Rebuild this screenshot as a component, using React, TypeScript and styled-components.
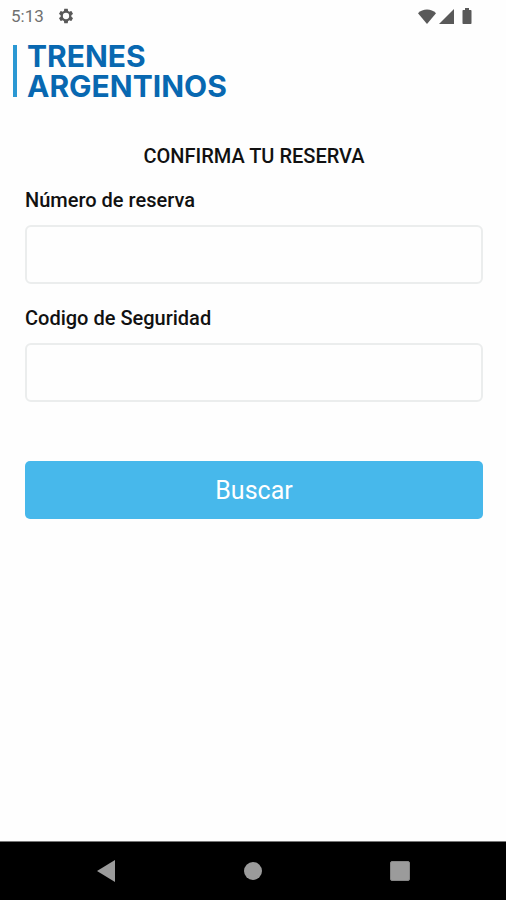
import React from 'react';
import styled, { createGlobalStyle } from 'styled-components';

const GlobalStyle = createGlobalStyle`
  *, *::before, *::after { box-sizing: border-box; }
  body {
    margin: 0;
    background: #fefefe;
    color: #111;
    font-family: Roboto, sans-serif;
  }
`;

const Screen = styled.div`
  display: flex;
  flex-direction: column;
  min-height: 100vh;
`;

const StatusBar = styled.div`
  display: flex;
  align-items: center;
  justify-content: space-between;
  height: 32px;
  padding: 0 34px 0 11px;
  color: #595959;
`;

const StatusGroup = styled.div<{ $gap: number }>`
  display: flex;
  align-items: center;
  gap: ${({ $gap }) => $gap}px;
`;

const Clock = styled.time`
  font-size: 17px;
  line-height: 20px;
  color: #707070;
`;

const Header = styled.header`
  display: flex;
  align-items: center;
  gap: 10px;
  padding: 9px 13px 0;
`;

const LogoBar = styled.span`
  width: 4px;
  height: 52px;
  background: #2b98d3;
`;

const LogoText = styled.div`
  color: #0868b1;
  font-family: Inter, sans-serif;
  font-size: 30px;
  font-weight: 700;
  line-height: 30px;
`;

const Form = styled.form`
  display: flex;
  flex: 1;
  flex-direction: column;
  padding: 43px 23px 0 25px;
`;

const Title = styled.h1`
  margin: 0 0 20px;
  font-size: 20px;
  font-weight: 500;
  line-height: 24px;
  text-align: center;
`;

const Field = styled.div`
  display: flex;
  flex-direction: column;
  gap: 13px;
  margin-bottom: 22px;
`;

const Label = styled.label`
  font-size: 20px;
  font-weight: 500;
  line-height: 24px;
`;

const TextInput = styled.input`
  width: 100%;
  height: 59px;
  padding: 0 16px;
  border: 2px solid #ebeded;
  border-radius: 6px;
  background: #fefefe;
  color: inherit;
  font: inherit;
  font-size: 20px;
`;

const SubmitButton = styled.button`
  height: 58px;
  margin-top: 37px;
  padding: 2px 0 0;
  border: 0;
  border-radius: 5px;
  background: #47b8eb;
  color: #fff;
  font-family: inherit;
  font-size: 25px;
  line-height: 32px;
  cursor: pointer;
`;

const NavBar = styled.nav`
  display: grid;
  grid-template-columns: repeat(3, 1fr);
  height: 59px;
  padding: 0 32px;
  border-top: 1px solid #777;
  background: #000;
`;

const NavButton = styled.button`
  display: flex;
  align-items: center;
  justify-content: center;
  padding: 0;
  border: 0;
  background: transparent;
  color: #9b9b9b;
  cursor: pointer;
`;

const GearIcon = () => (
  <svg width="18" height="18" viewBox="0 0 24 24" fill="currentColor" fillRule="evenodd" aria-hidden="true">
    <path d="M19.14 12.94c.04-.3.06-.61.06-.94 0-.32-.02-.64-.07-.94l2.03-1.58c.18-.14.23-.41.12-.61l-1.92-3.32c-.12-.22-.37-.29-.59-.22l-2.39.96c-.5-.38-1.03-.7-1.62-.94l-.36-2.54c-.04-.24-.24-.41-.48-.41h-3.84c-.24 0-.43.17-.47.41l-.36 2.54c-.59.24-1.13.57-1.62.94l-2.39-.96c-.22-.08-.47 0-.59.22L2.74 8.87c-.12.21-.08.47.12.61l2.03 1.58c-.05.3-.09.63-.09.94s.02.64.07.94l-2.03 1.58c-.18.14-.23.41-.12.61l1.92 3.32c.12.22.37.29.59.22l2.39-.96c.5.38 1.03.7 1.62.94l.36 2.54c.05.24.24.41.48.41h3.84c.24 0 .44-.17.47-.41l.36-2.54c.59-.24 1.13-.56 1.62-.94l2.39.96c.22.08.47 0 .59-.22l1.92-3.32c.12-.22.07-.47-.12-.61l-2.01-1.58ZM12 16.200a4.200 4.200 0 1 1 0-8.400 4.200 4.200 0 0 1 0 8.400Z" />
  </svg>
);

const WifiIcon = () => (
  <svg width="18" height="15" viewBox="0 0 18 15" fill="currentColor" aria-hidden="true">
    <path d="M9 15 0 4.200C2.400 1.600 5.600.4 9 .4s6.600 1.200 9 3.800Z" />
  </svg>
);

const SignalIcon = () => (
  <svg width="15" height="15" viewBox="0 0 15 15" fill="currentColor" aria-hidden="true">
    <path d="M15 0v15H0Z" />
  </svg>
);

const BatteryIcon = () => (
  <svg width="10" height="16" viewBox="0 0 10 16" fill="currentColor" aria-hidden="true">
    <path d="M3 0h4v2h1.700c.5 0 .8.300.8.800v12.400c0 .5-.3.800-.8.800H1.300c-.5 0-.8-.3-.8-.8V2.800c0-.5.3-.8.8-.8H3Z" />
  </svg>
);

const BackIcon = () => (
  <svg width="18" height="22" viewBox="0 0 18 22" fill="currentColor" aria-hidden="true">
    <path d="M18 0v22L0 11Z" />
  </svg>
);

const HomeIcon = () => (
  <svg width="18" height="18" viewBox="0 0 18 18" fill="currentColor" aria-hidden="true">
    <circle cx="9" cy="9" r="9" />
  </svg>
);

const RecentsIcon = () => (
  <svg width="20" height="20" viewBox="0 0 20 20" aria-hidden="true">
    <rect x=".5" y=".5" width="19" height="19" rx="1.500" fill="#9b9b9b" stroke="#868686" />
  </svg>
);

export default function App() {
  return (
    <>
      <GlobalStyle />
      <Screen>
        <StatusBar>
          <StatusGroup $gap={13}>
            <Clock>5:13</Clock>
            <GearIcon />
          </StatusGroup>
          <StatusGroup $gap={8}>
            <StatusGroup $gap={3}>
              <WifiIcon />
              <SignalIcon />
            </StatusGroup>
            <BatteryIcon />
          </StatusGroup>
        </StatusBar>
        <Header>
          <LogoBar />
          <LogoText>
            TRENES
            <br />
            ARGENTINOS
          </LogoText>
        </Header>
        <Form onSubmit={(event) => event.preventDefault()}>
          <Title>CONFIRMA TU RESERVA</Title>
          <Field>
            <Label htmlFor="reserva">Número de reserva</Label>
            <TextInput id="reserva" type="text" />
          </Field>
          <Field>
            <Label htmlFor="codigo">Codigo de Seguridad</Label>
            <TextInput id="codigo" type="text" />
          </Field>
          <SubmitButton type="submit">Buscar</SubmitButton>
        </Form>
        <NavBar>
          <NavButton type="button" aria-label="Atrás"><BackIcon /></NavButton>
          <NavButton type="button" aria-label="Inicio"><HomeIcon /></NavButton>
          <NavButton type="button" aria-label="Recientes"><RecentsIcon /></NavButton>
        </NavBar>
      </Screen>
    </>
  );
}
